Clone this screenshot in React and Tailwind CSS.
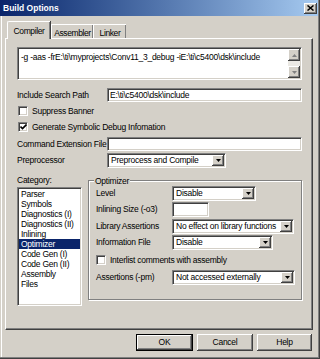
import React from "react"

const sunken =
  "bg-white border border-t-[#808080] border-l-[#808080] border-r-white border-b-white shadow-[inset_1px_1px_0_#404040,inset_-1px_-1px_0_#d4d0c8]"
const raised =
  "bg-[#d4d0c8] shadow-[inset_-1px_-1px_0_#404040,inset_1px_1px_0_#ffffff,inset_-2px_-2px_0_#808080,inset_2px_2px_0_#d4d0c8]"

const Arrow = ({ up, color = "#000" }) => (
  <svg width="5" height="3" viewBox="0 0 5 3">
    <polygon points={up ? "0,3 5,3 2.5,0" : "0,0 5,0 2.5,3"} fill={color} />
  </svg>
)

const Select = ({ w, value }) => (
  <div className={`${sunken} ${w} h-[15px] flex items-center p-[1px]`}>
    <span className="flex-1 pl-[2px] truncate leading-none">{value}</span>
    <span className={`${raised} w-[12px] h-full flex items-center justify-center shrink-0`}>
      <Arrow />
    </span>
  </div>
)

const Check = ({ checked }) => (
  <span className={`${sunken} w-[10px] h-[10px] flex items-center justify-center shrink-0`}>
    {checked && (
      <svg width="7" height="6" viewBox="0 0 7 6">
        <polyline points="0.5,2.5 2.5,4.5 6.5,0.5" stroke="#000" strokeWidth="1.6" fill="none" />
      </svg>
    )}
  </span>
)

const categories = [
  "Parser",
  "Symbols",
  "Diagnostics (I)",
  "Diagnostics (II)",
  "Inlining",
  "Optimizer",
  "Code Gen (I)",
  "Code Gen (II)",
  "Assembly",
  "Files",
]

export default function App() {
  return (
    <div className="w-[320px] h-[359px] bg-[#d4d0c8] flex flex-col text-[8.5px] tracking-[-0.25px] text-black font-['Liberation_Sans',Arial,sans-serif] shadow-[inset_-1px_-1px_0_#404040,inset_-2px_-2px_0_#808080,inset_1px_0_0_#d4d0c8,inset_2px_0_0_#ffffff] overflow-hidden">
      {/* title bar */}
      <div className="h-[16px] mr-[2px] bg-gradient-to-r from-[#0a246a] to-[#a6caf0] flex items-center justify-between pl-[3px] pr-[1px]">
        <span className="text-white font-bold text-[8.5px] tracking-normal">Build Options</span>
        <span className={`${raised} w-[13px] h-[11px] flex items-center justify-center`}>
          <svg width="7" height="6" viewBox="0 0 7 6">
            <path d="M0.5 0.5 L6.5 5.5 M6.5 0.5 L0.5 5.5" stroke="#000" strokeWidth="1.5" />
          </svg>
        </span>
      </div>

      {/* tabs */}
      <div className="flex items-end h-[17px] mt-[5px] ml-[7px] relative z-10 tracking-[-0.4px] whitespace-nowrap">
        <div className="h-[18px] -mb-[1px] w-[43px] bg-[#d4d0c8] border-l border-t border-white rounded-tl-[2px] shadow-[inset_-1px_0_0_#808080,1px_0_0_#404040] flex justify-center pt-[3px]">
          Compiler
        </div>
        <div className="h-[14px] w-[42px] ml-[1px] border-l border-t border-white shadow-[inset_-1px_0_0_#808080] flex justify-center pt-[2px]">
          Assembler
        </div>
        <div className="h-[14px] w-[33px] border-l border-t border-white shadow-[inset_-1px_0_0_#808080] flex justify-center pt-[2px]">
          Linker
        </div>
      </div>

      {/* tab panel */}
      <div className="ml-[5px] w-[308px] h-[292px] border border-t-white border-l-white border-r-[#404040] border-b-[#404040] shadow-[inset_-1px_-1px_0_#808080] flex flex-col pl-[11px] pt-[8px]">
        <div className={`${sunken} w-[285px] h-[33px] flex p-[1px]`}>
          <div className="flex-1 pl-[2px] pt-[4px] leading-none whitespace-nowrap overflow-hidden">
            -g -aas -frE:\ti\myprojects\Conv11_3_debug -iE:\ti\c5400\dsk\include
          </div>
          <div className="w-[12px] flex flex-col bg-[#ebe9e4]">
            <span className={`${raised} h-[12px] flex items-center justify-center`}>
              <Arrow up color="#808080" />
            </span>
            <span className="flex-1" />
            <span className={`${raised} h-[12px] flex items-center justify-center`}>
              <Arrow color="#808080" />
            </span>
          </div>
        </div>

        <div className="flex items-center h-[14px] mt-[8px]">
          <span className="w-[90px]">Include Search Path</span>
          <div className={`${sunken} w-[195px] h-[14px] flex items-center pl-[2px] leading-none`}>
            E:\ti\c5400\dsk\include
          </div>
        </div>

        <div className="flex items-center h-[10px] mt-[4px] pl-[1px]">
          <Check />
          <span className="ml-[4px]">Suppress Banner</span>
        </div>

        <div className="flex items-center h-[10px] mt-[6px] pl-[1px]">
          <Check checked />
          <span className="ml-[4px]">Generate Symbolic Debug Infomation</span>
        </div>

        <div className="flex items-center h-[14px] mt-[5px]">
          <span className="w-[90px]">Command Extension File</span>
          <div className={`${sunken} w-[195px] h-[14px]`} />
        </div>

        <div className="flex items-center h-[15px] mt-[2px]">
          <span className="w-[90px]">Preprocessor</span>
          <Select w="w-[119px]" value="Preprocess and Compile" />
        </div>

        <div className="flex mt-[7px]">
          <div className="flex flex-col">
            <span className="h-[10px] leading-[10px]">Category:</span>
            <div className={`${sunken} w-[65px] h-[119px] mt-[2px] p-[1px] flex flex-col overflow-hidden`}>
              {categories.map((c) => (
                <div
                  key={c}
                  className={`h-[10px] leading-[10px] pl-[2px] whitespace-nowrap ${
                    c === "Optimizer" ? "bg-[#0a246a] text-white" : ""
                  }`}
                >
                  {c}
                </div>
              ))}
            </div>
          </div>

          <div className="relative ml-[6px] mt-[5px] w-[214px] h-[120px] border border-[#808080] shadow-[inset_1px_1px_0_#ffffff,1px_1px_0_#ffffff] flex flex-col pt-[5px] pl-[7px]">
            <span className="absolute -top-[5px] left-[5px] px-[1px] bg-[#d4d0c8] leading-[10px]">Optimizer</span>

            <div className="flex items-center h-[15px]">
              <span className="w-[76px]">Level</span>
              <Select w="w-[84px]" value="Disable" />
            </div>
            <div className="flex items-center h-[15px] mt-[1px]">
              <span className="w-[76px]">Inlining Size (-o3)</span>
              <div className={`${sunken} w-[37px] h-[15px]`} />
            </div>
            <div className="flex items-center h-[15px] mt-[2px]">
              <span className="w-[76px]">Library Assertions</span>
              <Select w="w-[122px]" value="No effect on library functions" />
            </div>
            <div className="flex items-center h-[15px] mt-[1px]">
              <span className="w-[76px]">Information File</span>
              <Select w="w-[101px]" value="Disable" />
            </div>
            <div className="flex items-center h-[10px] mt-[5px]">
              <Check />
              <span className="ml-[4px]">Interlist comments with assembly</span>
            </div>
            <div className="flex items-center h-[15px] mt-[5px]">
              <span className="w-[76px]">Assertions (-pm)</span>
              <Select w="w-[123px]" value="Not accessed externally" />
            </div>
          </div>
        </div>
      </div>

      {/* buttons */}
      <div className="flex justify-end gap-[4px] mt-[4px] mr-[8px]">
        <button className="w-[57px] h-[17px] border border-black p-0 flex">
          <span className={`${raised} flex-1 flex items-center justify-center`}>OK</span>
        </button>
        <button className={`${raised} w-[56px] h-[17px] flex items-center justify-center`}>Cancel</button>
        <button className={`${raised} w-[55px] h-[17px] flex items-center justify-center`}>Help</button>
      </div>
    </div>
  )
}
